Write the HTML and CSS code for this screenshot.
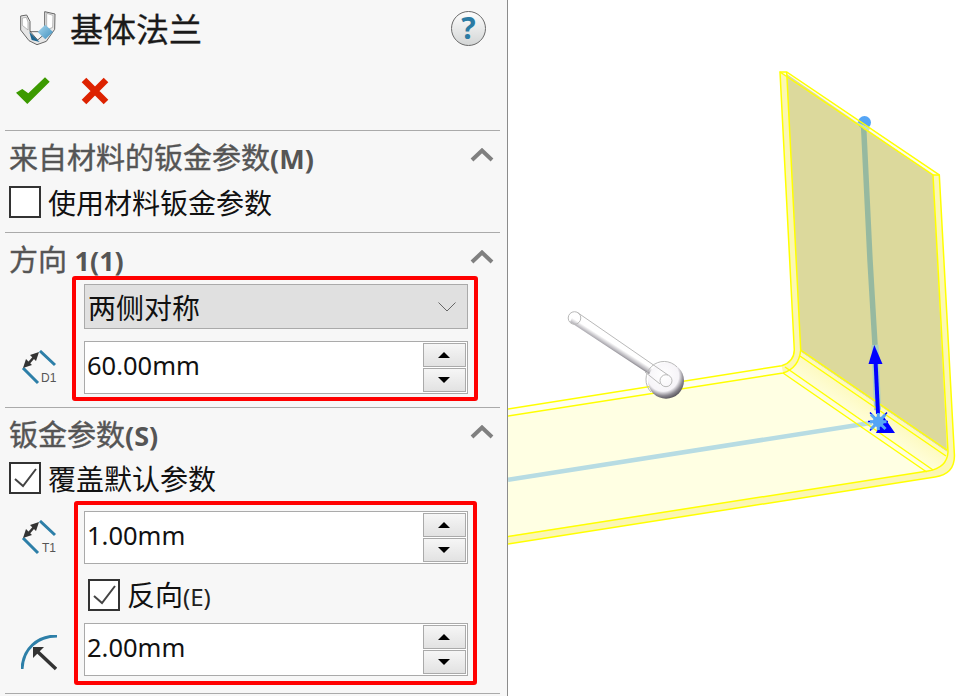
FILE: index.html
```html
<!DOCTYPE html>
<html lang="en">
<head>
    <meta charset="UTF-8">
    <title>基体法兰</title>
    <link rel="stylesheet" href="styles.css">
</head>
<body>
    <aside class="panel">
        <header class="head">
            <svg class="head-icon" viewBox="54 28 114 114">
                <defs>
                    <linearGradient id="diamond" x1="0" y1="0" x2="1" y2="1">
                        <stop offset="0" stop-color="#a9d8ef"/>
                        <stop offset="1" stop-color="#3f8fbd"/>
                    </linearGradient>
                </defs>
                <path d="M59 46 L77 43 L87 62 L87 92 L110 118 L131 100 L131 33 L162 40 L161 86 L136 122 L108 132 L84 120 L59 88 Z" fill="#e6e6e6" stroke="#666" stroke-width="3" stroke-linejoin="round"/>
                <path d="M64 52 L76 50 L81 64 L81 88 L64 74 Z" fill="#fff" stroke="#999" stroke-width="2"/>
                <path d="M137 38 L156 44 L155 80 L137 88 Z" fill="#fff" stroke="#999" stroke-width="2"/>
                <path d="M85 94 L116 124 L92 118 Z" fill="#1f6690"/>
                <path d="M87 93 L114 93" stroke="#222" stroke-width="2"/>
                <path d="M133 72 L156 94 L133 116 L110 94 Z" fill="url(#diamond)"/>
            </svg>
            <h1 class="title">基体法兰</h1>
            <div class="help">?</div>
        </header>

        <div class="actions">
            <svg class="icon-ok" viewBox="0 0 34 28"><path d="M0 15.7 L6.3 12 L12.3 16.3 L29 .3 L33.7 4.7 L11.3 27 Z" fill="#3c9a00"/></svg>
            <svg class="icon-cancel" viewBox="0 0 28 28"><path d="M3 3 L25 25 M25 3 L3 25" stroke="#dd2200" stroke-width="6.5"/></svg>
        </div>

        <section class="section">
            <div class="sec-title">
                <h2>来自材料的钣金参数<b>(M)</b></h2>
                <svg class="chevron" viewBox="0 0 24 14"><path d="M2 12 L12 2.500 L22 12" fill="none" stroke="#808080" stroke-width="4"/></svg>
            </div>
            <label class="check-row">
                <span class="box"></span>
                <span class="check-label">使用材料钣金参数</span>
            </label>
        </section>

        <section class="section sec-dir">
            <div class="sec-title short">
                <h2>方向 <b>1(1)</b></h2>
                <svg class="chevron" viewBox="0 0 24 14"><path d="M2 12 L12 2.500 L22 12" fill="none" stroke="#808080" stroke-width="4"/></svg>
            </div>
            <div class="group">
                <div class="icons">
                    <svg class="param-icon icon-d1" viewBox="0 0 36 36">
                        <path d="M19 1 L34 15 M2 18 L17 33" stroke="#2d7fa8" stroke-width="3" fill="none"/>
                        <path d="M7 14 L14 6" stroke="#333" stroke-width="2.500"/>
                        <path d="M2 18 L5 9 L11 15 Z M18 2 L15 11 L9 5 Z" fill="#333"/>
                        <text class="icon-text" x="20" y="32">D1</text>
                    </svg>
                </div>
                <div class="redbox box-dir">
                    <div class="select">
                        <span>两侧对称</span>
                        <svg class="select-arrow" viewBox="0 0 18 10"><path d="M.5 .5 L9 9 L17.500 .5" fill="none" stroke="#666" stroke-width="1"/></svg>
                    </div>
                    <div class="field">
                        <span class="value">60.00mm</span>
                        <div class="spin"><button class="up"></button><button class="down"></button></div>
                    </div>
                </div>
            </div>
        </section>

        <section class="section sec-sheet">
            <div class="sec-title">
                <h2>钣金参数<b>(S)</b></h2>
                <svg class="chevron" viewBox="0 0 24 14"><path d="M2 12 L12 2.500 L22 12" fill="none" stroke="#808080" stroke-width="4"/></svg>
            </div>
            <label class="check-row">
                <span class="box"><svg viewBox="0 0 28 28"><path d="M4 15 L12 22 L25 5" fill="none" stroke="#444" stroke-width="2"/></svg></span>
                <span class="check-label">覆盖默认参数</span>
            </label>
            <div class="group group-sheet">
                <div class="icons">
                    <svg class="param-icon icon-t1" viewBox="0 0 36 36">
                        <path d="M19 1 L34 15 M2 18 L17 33" stroke="#2d7fa8" stroke-width="3" fill="none"/>
                        <path d="M7 14 L14 6" stroke="#333" stroke-width="2.500"/>
                        <path d="M2 18 L5 9 L11 15 Z M18 2 L15 11 L9 5 Z" fill="#333"/>
                        <text class="icon-text" x="21" y="32">T1</text>
                    </svg>
                    <svg class="param-icon icon-radius" viewBox="0 0 36 36">
                        <path d="M1 34 C2 14 16 1 36 1" stroke="#2d7fa8" stroke-width="3" fill="none"/>
                        <path d="M12 12 L23 12 L12 23 Z" fill="#333"/>
                        <path d="M17 17 L35 34" stroke="#333" stroke-width="3.500"/>
                    </svg>
                </div>
                <div class="redbox box-sheet">
                    <div class="field">
                        <span class="value">1.00mm</span>
                        <div class="spin"><button class="up"></button><button class="down"></button></div>
                    </div>
                    <label class="check-row inner">
                        <span class="box"><svg viewBox="0 0 28 28"><path d="M4 15 L12 22 L25 5" fill="none" stroke="#444" stroke-width="2"/></svg></span>
                        <span class="check-label">反向<small>(E)</small></span>
                    </label>
                    <div class="field">
                        <span class="value">2.00mm</span>
                        <div class="spin"><button class="up"></button><button class="down"></button></div>
                    </div>
                </div>
            </div>
        </section>
    </aside>

    <main class="view">
        <!-- viewBox keeps page coordinates so the model can be read off the screenshot -->
        <svg class="scene" viewBox="508 0 464 696">
            <defs>
                <linearGradient id="bend" gradientUnits="userSpaceOnUse" x1="855" y1="425" x2="872" y2="400">
                    <stop offset="0" stop-color="#ffffe3"/>
                    <stop offset="1" stop-color="#fdf9bb"/>
                </linearGradient>
                <linearGradient id="tube" gradientUnits="userSpaceOnUse" x1="622" y1="344" x2="615" y2="355">
                    <stop offset="0" stop-color="#ffffff"/>
                    <stop offset=".35" stop-color="#ffffff"/>
                    <stop offset=".7" stop-color="#b4b2b8"/>
                    <stop offset="1" stop-color="#444148"/>
                </linearGradient>
                <radialGradient id="ball" cx=".42" cy=".36" r=".7">
                    <stop offset="0" stop-color="#ffffff"/>
                    <stop offset=".62" stop-color="#f6f4f8"/>
                    <stop offset=".8" stop-color="#8a878f"/>
                    <stop offset="1" stop-color="#3f3c43"/>
                </radialGradient>
            </defs>

            <path d="M508 409 L781.700 365.700 Q794 362 794.300 350 L780 72 L786.700 72 L939.300 175 L954.300 453 Q956 474 935 477 L508 544 Z" fill="#fbf7b4"/>
            <path d="M786.700 72 L939.300 175 L933 175 L780 72 Z" fill="#fdfde8"/>
            <path d="M508 409 L781.700 365.700 L783 373 L508 416 Z" fill="#fffff0"/>
            <path d="M786.700 74 L933 175 L947 452 L800.700 352 Z" fill="#dcd99c"/>
            <path d="M508 416 L783 373 Q797 369 800.700 352 L947 452 Q947 468 928 471 L508 536 Z" fill="#ffffe3"/>
            <path d="M783 373 Q797 369 800.700 352 L947 452 Q947 468 928 471 Z" fill="url(#bend)"/>

            <path d="M508 479.700 L872 422.700" stroke="#b7dce3" stroke-width="4.500"/>
            <path d="M863.500 124 L870 260 L875 345" stroke="#96b9a0" stroke-width="5.500"/>
            <path d="M875 345 L877.500 410" stroke="#a8cfc4" stroke-width="7"/>
            <circle cx="864.500" cy="122.500" r="6.500" fill="#55a5f5"/>
            <path d="M856.700 121.700 L870 128.300 L868.300 131.700 L858.300 125 Z" fill="#c8dfc0"/>

            <g class="edges">
                <path d="M508 409 L781.700 365.700 Q794 362 794.300 350 L780 72 L786.700 72 L939.300 175 L954.300 453 Q956 474 935 477 L508 544"/>
                <path d="M508 416 L783 373 Q799 368 800.700 350 L786.700 72"/>
                <path d="M780 72 L933 175 L948 452 Q947 468 928 471 L508 536.500"/>
                <path d="M933 175 L939.300 175"/>
                <path d="M800.700 350 L947 450 M800 356 L946 456"/>
                <path d="M785 367 L933 470 M783 373 L926.700 472"/>
            </g>

            <path d="M875.500 360 L878 414" stroke="#0000ff" stroke-width="4"/>
            <path d="M874.300 345 L868.500 364 L882.500 364 Z" fill="#0000ff"/>
            <path d="M884 417 L895 433 L876 433 Z" fill="#0000ff"/>
            <path d="M870 412.500 L887 430.500 M887 412.500 L870 430.500 M868 421.500 L888 421.500" stroke="#0000ff" stroke-width="1.500"/>
            <path d="M871 414.500 L885.500 429 M885.500 414.500 L871 429 M870 421.700 L886.500 421.700 M878.300 413 L878.300 430" stroke="#55a5f5" stroke-width="3"/>
            <circle cx="878.300" cy="421.700" r="5.500" fill="#55a5f5"/>

            <path d="M575 312 L668 375 L655 378 L570 322 Z" fill="url(#tube)"/>
            <circle cx="666" cy="380.700" r="18" fill="url(#ball)"/>
            <g class="pin-lines">
                <circle cx="574.500" cy="318" r="6.300"/>
                <path d="M577.700 312.700 L668 375 M645 372 L660 384"/>
                <path d="M677 367 A17.800 17.800 0 0 0 651 392"/>
                <circle cx="666" cy="380.700" r="6"/>
            </g>
        </svg>
    </main>
</body>
</html>
```

FILE: styles.css
```css
* {
    box-sizing: border-box;
}

body {
    margin: 0;
    width: 972px;
    height: 696px;
    display: flex;
    overflow: hidden;
    background: #fff;
    font-family: "Noto Sans", "Noto Sans CJK SC", sans-serif;
    color: #111;
}

.panel {
    width: 508px;
    height: 696px;
    flex: none;
    padding: 0 7px 0 5px;
    background: #f7f7f7;
    border-right: 1px solid #8c8c8c;
    overflow: hidden;
}

.head {
    height: 60px;
    display: flex;
    align-items: center;
    padding-left: 14px;
}

.head-icon {
    width: 38px;
    height: 38px;
    margin-top: -2px;
}

.title {
    margin: 0 0 0 13px;
    font-size: 33px;
    font-weight: normal;
    line-height: 60px;
    color: #1a1a1a;
    -webkit-text-stroke: 0.3px #1a1a1a;
}

.help {
    width: 35px;
    height: 35px;
    margin-left: auto;
    margin-right: 14px;
    margin-top: -4px;
    border: 1px solid #6a6a6a;
    border-radius: 50%;
    background: linear-gradient(#fdfdfd, #d4d6d6);
    color: #2b7ba3;
    font-size: 30px;
    font-weight: bold;
    line-height: 32px;
    text-align: center;
}

.actions {
    height: 70px;
    display: flex;
    align-items: flex-start;
    padding: 17px 0 0 11px;
}

.icon-ok {
    width: 34px;
    height: 28px;
}

.icon-cancel {
    width: 28px;
    height: 28px;
    margin-left: 31px;
}

.section {
    border-top: 1px solid #aaa;
    height: 102px;
}

.sec-dir {
    height: 175px;
}

.sec-sheet {
    height: 287px;
    border-bottom: 1px solid #aaa;
}

.sec-title {
    height: 55px;
    display: flex;
    justify-content: space-between;
    padding: 7px 6px 0 4px;
}

.sec-title.short {
    height: 43px;
}

.sec-sheet .sec-title {
    height: 54px;
}

.sec-title h2 {
    margin: 0;
    font-size: 29px;
    font-weight: normal;
    line-height: 40px;
    color: #555;
    white-space: nowrap;
    -webkit-text-stroke: 0.4px #555;
}

.sec-title b {
    font-size: 27px;
    -webkit-text-stroke: 0;
}

.chevron {
    width: 24px;
    height: 14px;
    margin-top: 10px;
}

.check-row {
    display: flex;
    align-items: center;
    gap: 7px;
    height: 32px;
    padding-left: 4px;
}

.box {
    width: 32px;
    height: 32px;
    flex: none;
    border: 2px solid #333;
    background: #fff;
}

.box svg {
    display: block;
    width: 28px;
    height: 28px;
}

.check-label {
    padding-top: 2px;
    font-size: 28px;
    line-height: 32px;
    white-space: nowrap;
}

.check-label small {
    font-size: 24px;
    color: #222;
}

.group {
    display: flex;
    align-items: flex-start;
}

.group-sheet {
    margin-top: 7px;
}

.icons {
    width: 69px;
    flex: none;
    padding-left: 16px;
}

.group-sheet .icons {
    padding-top: 19px;
}

.param-icon {
    display: block;
    width: 36px;
    height: 36px;
}

.icon-d1 {
    margin-top: 74px;
}

.icon-radius {
    margin-top: 79px;
}

.icon-text {
    font-family: "Liberation Sans", sans-serif;
    font-size: 12px;
    fill: #555;
}

.redbox {
    border: 4px solid #f00;
    border-radius: 3px;
}

.box-dir {
    width: 406px;
    margin-left: -2px;
    height: 125px;
    padding: 4px 6px 0 8px;
}

.box-sheet {
    width: 403px;
    height: 184px;
    margin-left: 0;
    padding: 6px 5px 0 6px;
}

.select {
    height: 45px;
    display: flex;
    align-items: center;
    justify-content: space-between;
    margin-bottom: 12px;
    padding: 0 11px 0 3px;
    background: #e0e0e0;
    border: 1px solid #aaa;
    font-size: 28px;
}

.select-arrow {
    width: 18px;
    height: 10px;
}

.field {
    height: 53px;
    display: flex;
    justify-content: space-between;
    padding: 1px;
    background: #fff;
    border: 1px solid #aaa;
}

.value {
    padding-left: 1px;
    font-size: 25.5px;
    line-height: 45px;
}

.spin {
    width: 43px;
    display: flex;
    flex-direction: column;
    gap: 1px;
}

.spin button {
    flex: 1;
    position: relative;
    padding: 0;
    border: 1px solid #aaa;
    background: linear-gradient(#f6f6f6, #e2e2e2);
}

.spin button::after {
    content: "";
    position: absolute;
    left: 14px;
    top: 8px;
    border-left: 6px solid transparent;
    border-right: 6px solid transparent;
}

.spin .up::after {
    border-bottom: 6px solid #000;
}

.spin .down::after {
    border-top: 6px solid #000;
}

.check-row.inner {
    height: 32px;
    margin: 15px 0 12px;
    padding-left: 4px;
}

.view {
    flex: 1;
    height: 696px;
}

.scene {
    display: block;
    width: 464px;
    height: 696px;
}

.edges path {
    fill: none;
    stroke: #ffff00;
    stroke-width: 1.5;
}

.pin-lines circle,
.pin-lines path {
    fill: none;
    stroke: #b9b9b9;
    stroke-width: 1;
}
```
